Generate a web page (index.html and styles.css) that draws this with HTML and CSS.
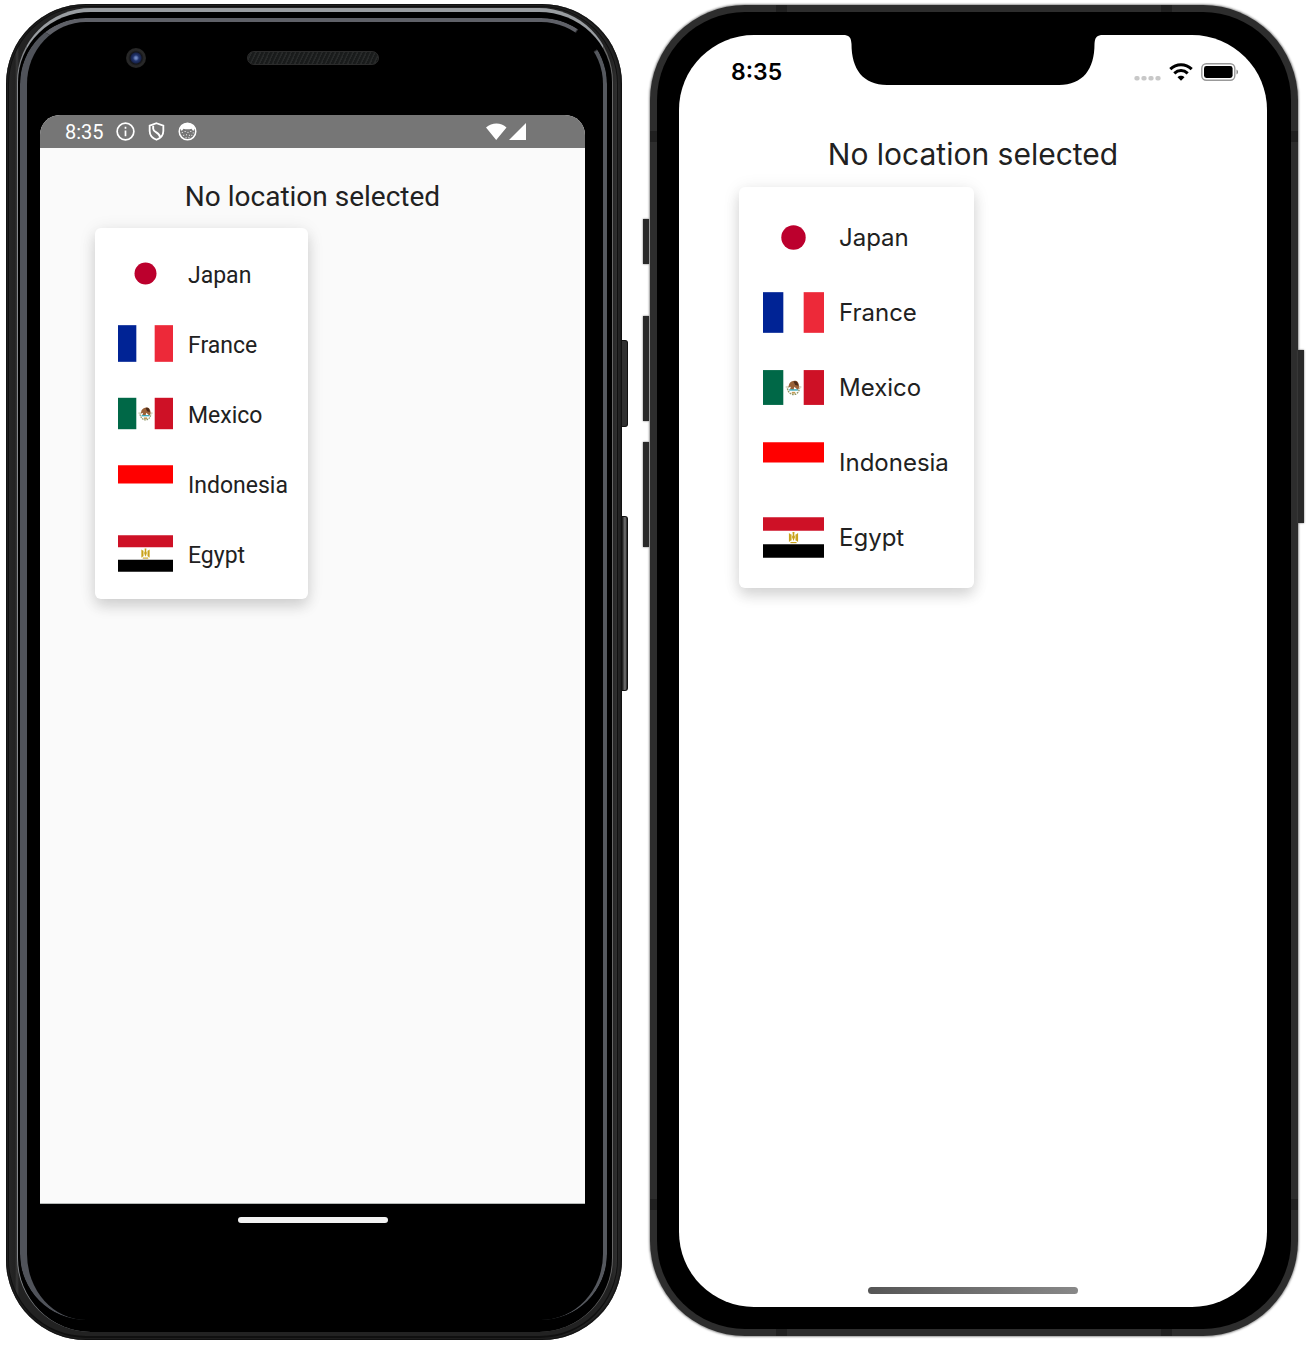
FILE: index.html
```html
<!DOCTYPE html>
<html lang="en">
<head>
<meta charset="utf-8">
<meta name="viewport" content="width=device-width, initial-scale=1">
<title>Location picker</title>
<link rel="stylesheet" href="styles.css">
</head>
<body>
<svg class="sprite" aria-hidden="true">
  <symbol id="flag-japan" viewBox="0 0 60 40"><path fill="#fff" d="M0 0h60v40H0z"/><circle cx="30" cy="20" r="12" fill="#bc002d"/></symbol>
  <symbol id="flag-france" viewBox="0 0 60 40"><path fill="#fff" d="M0 0h60v40H0z"/><path fill="#002395" d="M0 0h20v40H0z"/><path fill="#ed2939" d="M40 0h20v40H40z"/></symbol>
  <symbol id="flag-mexico" viewBox="0 0 70 40">
    <path fill="#fff" d="M0 0h70v40H0z"/><path fill="#006847" d="M0 0h23.3v40H0z"/><path fill="#ce1126" d="M46.7 0H70v40H46.700z"/>
    <path d="M28 21c1 5 4 7 7 7s6-2 7-7" fill="none" stroke="#8f9564" stroke-width="1.600" stroke-dasharray="2 1"/>
    <path d="M26 19.500h4M40 19.500h4" stroke="#b9b795" stroke-width="1.200"/>
    <path fill="#9a6238" d="M30 16c2-4 8-5 10-2 2 3 2 7 0 9l-4-4-1 4-4-1 1-3-3 1z"/>
    <path fill="#4d2b18" d="M35 13c4-1 5 1 5.500 5l-3.500-1z"/>
    <path d="M30 22.800h10" stroke="#30a5b5" stroke-width="1.600"/><path d="M33 26h4" stroke="#c19a54" stroke-width="2"/>
  </symbol>
  <symbol id="flag-indonesia" viewBox="0 0 60 40"><path fill="#fff" d="M0 0h60v40H0z"/><path fill="red" d="M0 0h60v20H0z"/></symbol>
  <symbol id="flag-egypt" viewBox="0 0 60 40">
    <path fill="#fff" d="M0 0h60v40H0z"/><path fill="#ce1126" d="M0 0h60v13.300H0z"/><path d="M0 26.700h60V40H0z"/>
    <path fill="#c9a21c" d="M25.500 15.500l2 1.500v6l-2 1.500zM34.500 15.500l-2 1.500v6l2 1.500z"/>
    <path d="M28 17v6M32 17v6" stroke="#ddc263" stroke-width=".8"/>
    <path fill="#c9a21c" d="M29 14.500h2l-.3 3 .8 2-1.500 4-1.500-4 .8-2z"/><path d="M27 25h6" stroke="#c9a21c" stroke-width="1.200"/>
  </symbol>
</svg>

<main class="devices">
  <section class="pixel" aria-label="Android phone">
    <span class="pixel-rim" aria-hidden="true"></span>
    <span class="pixel-glass" aria-hidden="true"></span>
    <span class="pixel-edge" aria-hidden="true"></span>
    <span class="key pixel-power" aria-hidden="true"></span>
    <span class="key pixel-volume" aria-hidden="true"></span>

    <div class="pixel-top" aria-hidden="true">
      <span class="camera"></span>
      <span class="speaker"></span>
    </div>

    <div class="screen pixel-screen">
      <header class="android-status">
        <time>8:35</time>
        <svg class="status-icon" viewBox="0 0 20 20" aria-hidden="true"><circle cx="10" cy="10" r="8.800" fill="none" stroke="#fff" stroke-width="1.800"/><path d="M10 9v6M10 5v2" stroke="#fff" stroke-width="1.800"/></svg>
        <svg class="status-icon" viewBox="0 0 20 20" aria-hidden="true"><path d="M10 1.300l7.200 2.600v5.500c0 4.300-3 7.600-7.200 9.300-4.200-1.700-7.200-5-7.200-9.300V3.900z" fill="none" stroke="#fff" stroke-width="1.900"/><path d="M6.500 4v3c0 4 7 4 7.300 9" fill="none" stroke="#fff" stroke-width="2"/></svg>
        <svg class="status-icon" viewBox="0 0 20 20" aria-hidden="true"><circle cx="10" cy="10" r="8.700" fill="none" stroke="#fff" stroke-width="1.600"/><path fill="#fff" d="M2 6.500C4 2.500 7 1 10 1s6 1.500 8 5.500l-2 3-1.800-2.500c-2.500 1-6 1-8.400 0L4 9.500z"/><path d="M4 11h1M7 10h1M10 11h1M13 10h1M15.500 11.500h1M5.500 14h1M8.500 13.500h1M11.500 14h1M14 14h1M8 16.500h1M11 16.500h1" stroke="#fff" stroke-width="1"/></svg>
        <svg class="signal" viewBox="0 0 40 17" aria-hidden="true"><path fill="#fff" d="M0 4.500C6-1 15-1 20.500 4.500L10.200 17zM40 0v17H23z"/></svg>
      </header>
      <div class="app">
        <h1>No location selected</h1>
        <ul class="menu">
          <li><button type="button"><svg class="flag"><use href="#flag-japan"/></svg>Japan</button></li>
          <li><button type="button"><svg class="flag"><use href="#flag-france"/></svg>France</button></li>
          <li><button type="button"><svg class="flag"><use href="#flag-mexico"/></svg>Mexico</button></li>
          <li><button type="button"><svg class="flag"><use href="#flag-indonesia"/></svg>Indonesia</button></li>
          <li><button type="button"><svg class="flag"><use href="#flag-egypt"/></svg>Egypt</button></li>
        </ul>
      </div>
    </div>

    <div class="pixel-chin" aria-hidden="true"><span class="nav-pill"></span></div>
  </section>

  <section class="iphone" aria-label="iPhone">
    <span class="key iphone-mute" aria-hidden="true"></span>
    <span class="key iphone-up" aria-hidden="true"></span>
    <span class="key iphone-down" aria-hidden="true"></span>
    <span class="key iphone-side" aria-hidden="true"></span>
    <div class="iphone-bezel">
      <div class="screen iphone-screen">
        <header class="ios-status">
          <time>8:35</time>
          <svg class="notch" viewBox="0 0 256 51" aria-hidden="true"><path d="M0 0h256c-5 1-6 3-6.500 9C249.500 34 238 50 214 50H42C18 50 6.500 34 6.500 9 6 3 5 1 0 0z"/></svg>
          <div class="ios-icons" aria-hidden="true">
            <svg class="dots" viewBox="0 0 27 18"><path d="M2.500 15.300h1M9.500 15.300h1M16.500 15.300h1M23.500 15.300h1" stroke="#c8c8c8" stroke-width="4.400" stroke-linecap="round"/></svg>
            <svg class="wifi" viewBox="0 0 24 18"><path d="M1.300 6.200C7.500.2 16.500.2 22.700 6.200M5.300 10.400c4-3.800 9.400-3.800 13.400 0" fill="none" stroke="#000" stroke-width="3"/><path d="M8.500 14.200c2-1.900 5-1.900 7 0L12 17.700z"/></svg>
            <svg class="battery" viewBox="0 0 38 18"><rect x=".8" y=".8" width="33" height="16.400" rx="4.500" fill="none" stroke="#999" stroke-width="1.400"/><rect x="3" y="3" width="28.600" height="12" rx="2.400"/><path fill="#888" d="M35.500 6.500c2 .8 2 4.200 0 5z"/></svg>
          </div>
        </header>
        <div class="app">
          <h1>No location selected</h1>
          <ul class="menu">
            <li><button type="button"><svg class="flag"><use href="#flag-japan"/></svg>Japan</button></li>
            <li><button type="button"><svg class="flag"><use href="#flag-france"/></svg>France</button></li>
            <li><button type="button"><svg class="flag"><use href="#flag-mexico"/></svg>Mexico</button></li>
            <li><button type="button"><svg class="flag"><use href="#flag-indonesia"/></svg>Indonesia</button></li>
            <li><button type="button"><svg class="flag"><use href="#flag-egypt"/></svg>Egypt</button></li>
          </ul>
        </div>
        <span class="home-bar" aria-hidden="true"></span>
      </div>
    </div>
  </section>
</main>
</body>
</html>
```

FILE: styles.css
```css
* { box-sizing: border-box; }

body {
  margin: 0;
  background: #fff;
  color: #212121;
}

.sprite { display: none; }

.devices {
  display: grid;
  grid-template-columns: 616fr 648fr;
  gap: 28px;
  min-height: 100vh;
  padding: 4px 12px 8px 6px;
}

.screen {
  display: flex;
  flex: 1;
  flex-direction: column;
}

/* Location list, shared by both phones */
.app {
  display: flex;
  flex-direction: column;
  align-items: flex-start;
}

h1 {
  align-self: center;
  margin: 0;
  font-weight: 400;
  line-height: 32px;
}

.menu {
  margin: 0;
  list-style: none;
  background: #fff;
  border-radius: 6px;
  box-shadow: 0 8px 14px rgba(0, 0, 0, .12), 0 2px 18px rgba(0, 0, 0, .09);
}

.menu button {
  display: flex;
  align-items: center;
  gap: 15px;
  width: 100%;
  border: 0;
  background: none;
  color: inherit;
  font: inherit;
  text-align: left;
}

/* Android phone */
.pixel {
  position: relative;
  display: flex;
  flex-direction: column;
  padding: 0 37px 0 34px;
  border-radius: 80px;
  background: #252525;
  box-shadow: inset 0 0 2px 1px #0c0c0c;
  font-family: Roboto, "Liberation Sans", sans-serif;
}

.pixel-rim,
.pixel-glass,
.pixel-edge {
  position: absolute;
}

.pixel-rim {
  inset: 2px 4px 2px 2px;
  border: 1px solid #101010;
  border-width: 1px 1px 2px;
  border-radius: 78px;
  background: linear-gradient(90deg, #262626, #222 6px, #383838 8px, #222 10px, #222 calc(100% - 6px), #303030);
}

.pixel-glass {
  inset: 4px 9px 8px 11px;
  border: solid;
  border-width: 4px 1px 0;
  border-color: #999da1 #666 #222 #85888c;
  border-radius: 74px;
  background: #000;
}

.pixel-edge {
  inset: 14px 15px 20px 14px;
  border: solid;
  border-width: 4px 4px 0 7px;
  border-color: #5f6168 #55585e #000 #50535a;
  border-radius: 66px;
  -webkit-mask-image: radial-gradient(circle at calc(100% - 19px) 21px, transparent 13px, #000 15px);
  mask-image: radial-gradient(circle at calc(100% - 19px) 21px, transparent 13px, #000 15px);
}

.key { position: absolute; }

.pixel-power,
.pixel-volume {
  right: -6px;
  width: 6px;
  border: 1px solid #111;
  border-left: 0;
  border-radius: 0 3px 3px 0;
  background: #303030;
}

.pixel-power { top: 336px; height: 87px; }
.pixel-volume { top: 512px; height: 175px; background: linear-gradient(90deg, #111, #777 60%, #222); }

.pixel-top {
  position: relative;
  display: grid;
  grid-template-columns: 1fr 132px 1fr;
  align-items: center;
  height: 111px;
  padding-bottom: 3px;
}

.camera {
  width: 20px;
  height: 20px;
  margin-left: 86px;
  border-radius: 50%;
  background: radial-gradient(circle at 50% 50%, #6f86c0 0 1px, #22356c 3px, #17234d 5px, #141519 6px, #292929 8px, #1c1c1c);
}

.speaker {
  height: 14px;
  border: 1px solid #2c2c2c;
  border-radius: 7px;
  background: repeating-linear-gradient(115deg, #191b1b 0 2px, #282a2a 3px 4px);
}

.pixel-screen {
  position: relative;
  overflow: hidden;
  border-bottom: 1px solid #b5b9b8;
  border-radius: 20px 20px 0 0;
  background: #fafafa;
}

.android-status {
  display: flex;
  align-items: center;
  gap: 12px;
  height: 33px;
  padding: 0 59px 0 25px;
  background: #767676;
  color: #fff;
  font-size: 20px;
  line-height: 24px;
}

.status-icon { width: 19px; height: 19px; }
.signal { width: 40px; height: 17px; margin-left: auto; }

.pixel h1 {
  margin: 33px 0 15px;
  font-size: 28px;
}

.pixel .menu {
  margin-left: 55px;
  padding: 12px 0 9px;
}

.pixel .menu button {
  height: 70px;
  padding: 0 20px 0 23px;
  font-size: 23px;
}

.pixel .flag {
  width: 55px;
  height: 37px;
  margin-bottom: 4px;
}

.pixel-chin {
  position: relative;
  display: flex;
  justify-content: center;
  height: 136px;
  padding-top: 13px;
}

.nav-pill {
  width: 150px;
  height: 6px;
  border-radius: 3px;
  background: #f2f2f2;
}

/* iPhone */
.iphone {
  position: relative;
  display: flex;
  margin: 1px 0 4px;
  padding: 7px;
  border-radius: 95px;
  background:
    linear-gradient(#202020, #202020) 0 126px / 100% 11px no-repeat,
    linear-gradient(#202020, #202020) 0 calc(100% - 126px) / 100% 11px no-repeat,
    linear-gradient(#202020, #202020) 126px 0 / 11px 100% no-repeat,
    linear-gradient(#202020, #202020) calc(100% - 126px) 0 / 11px 100% no-repeat,
    #2d2d2d;
  box-shadow: 0 0 2px 1px #999;
  font-family: Inter, "Liberation Sans", sans-serif;
}

.iphone-bezel {
  display: flex;
  flex: 1;
  padding: 23px 24px 22px 22px;
  border-radius: 88px;
  background: #000;
}

.iphone-screen {
  border-radius: 75px;
  background: #fff;
}

.iphone .key {
  width: 6px;
  background: #292929;
  box-shadow: 0 0 2px #555;
}

.iphone-mute,
.iphone-up,
.iphone-down { left: -7px; }

.iphone-mute { top: 214px; height: 45px; }
.iphone-up { top: 311px; height: 105px; }
.iphone-down { top: 437px; height: 105px; }
.iphone-side { top: 345px; right: -6px; height: 173px; }

.ios-status {
  display: grid;
  grid-template-columns: 1fr 256px 1fr;
  align-items: center;
  height: 74px;
  padding: 0 28px;
}

.ios-status time {
  padding-left: 24px;
  color: #000;
  font-size: 23px;
  font-weight: 600;
  line-height: 28px;
}

.notch { align-self: start; width: 256px; height: 51px; }

.ios-icons {
  display: flex;
  justify-content: flex-end;
  gap: 8px;
}

.ios-icons svg { height: 18px; }
.dots { width: 27px; }
.wifi { width: 24px; }
.battery { width: 38px; }

.iphone h1 {
  margin: 29px 0 17px;
  font-size: 30px;
}

.iphone .menu {
  margin-left: 60px;
  padding: 13px 0;
}

.iphone .menu button {
  height: 75px;
  padding: 0 25px 0 24px;
  font-size: 24px;
}

.iphone .flag { width: 61px; height: 41px; }

.home-bar {
  align-self: center;
  width: 210px;
  height: 7px;
  margin: auto 0 13px;
  border-radius: 4px;
  background: linear-gradient(90deg, #555, #888);
}
```
